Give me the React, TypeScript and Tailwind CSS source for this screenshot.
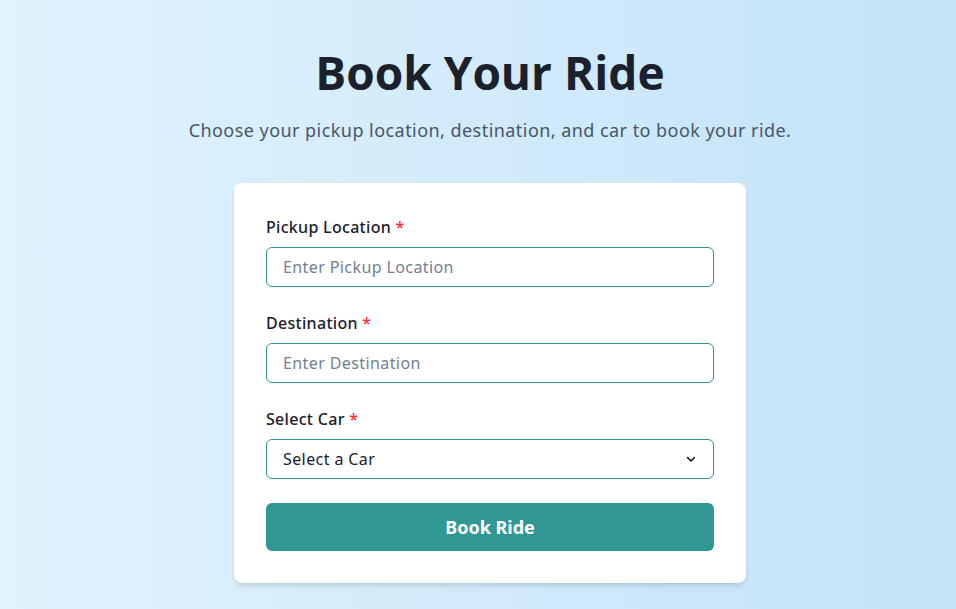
export default function App() {
  return (
    <div className="min-h-screen w-full bg-gradient-to-r from-[#e1f3fd] to-[#c2e3f8] flex flex-col items-center pt-[40px] pl-6 font-['Noto_Sans',sans-serif]">
      <h1 className="text-[46px] leading-[64px] font-bold text-[#1a202c] font-['Open_Sans',sans-serif]">
        Book Your Ride
      </h1>
      <p className="mt-[13px] text-[18px] leading-[26px] tracking-[0.45px] text-[#4a5568]">
        Choose your pickup location, destination, and car to book your ride.
      </p>

      <div className="mt-[40px] w-[512px] bg-white rounded-lg shadow-md p-8 flex flex-col gap-6">
        <div>
          <label className="block text-[16px] leading-6 font-medium tracking-[0.3px] text-[#1a202c] mb-2">
            Pickup Location <span className="text-red-500">*</span>
          </label>
          <input
            placeholder="Enter Pickup Location"
            className="w-full h-10 px-4 border border-[#319795] rounded-md text-[16px] tracking-[0.4px] text-[#1f2937] placeholder:text-[#718096] outline-none"
          />
        </div>
        <div>
          <label className="block text-[16px] leading-6 font-medium tracking-[0.3px] text-[#1a202c] mb-2">
            Destination <span className="text-red-500">*</span>
          </label>
          <input
            placeholder="Enter Destination"
            className="w-full h-10 px-4 border border-[#319795] rounded-md text-[16px] tracking-[0.4px] text-[#1f2937] placeholder:text-[#718096] outline-none"
          />
        </div>
        <div>
          <label className="block text-[16px] leading-6 font-medium tracking-[0.3px] text-[#1a202c] mb-2">
            Select Car <span className="text-red-500">*</span>
          </label>
          <div className="w-full h-10 pl-4 pr-[14px] border border-[#319795] rounded-md flex items-center justify-between">
            <span className="text-[16px] tracking-[0.4px] text-[#1a202c]">Select a Car</span>
            <svg width="16" height="16" viewBox="0 0 24 24" fill="none" stroke="#1a202c" strokeWidth="2.5" strokeLinecap="round" strokeLinejoin="round">
              <path d="M7 10l5 5 5-5" />
            </svg>
          </div>
        </div>
        <button className="w-full h-12 rounded-md bg-[#319795] text-white text-[18px] font-bold">
          Book Ride
        </button>
      </div>
    </div>
  );
}
